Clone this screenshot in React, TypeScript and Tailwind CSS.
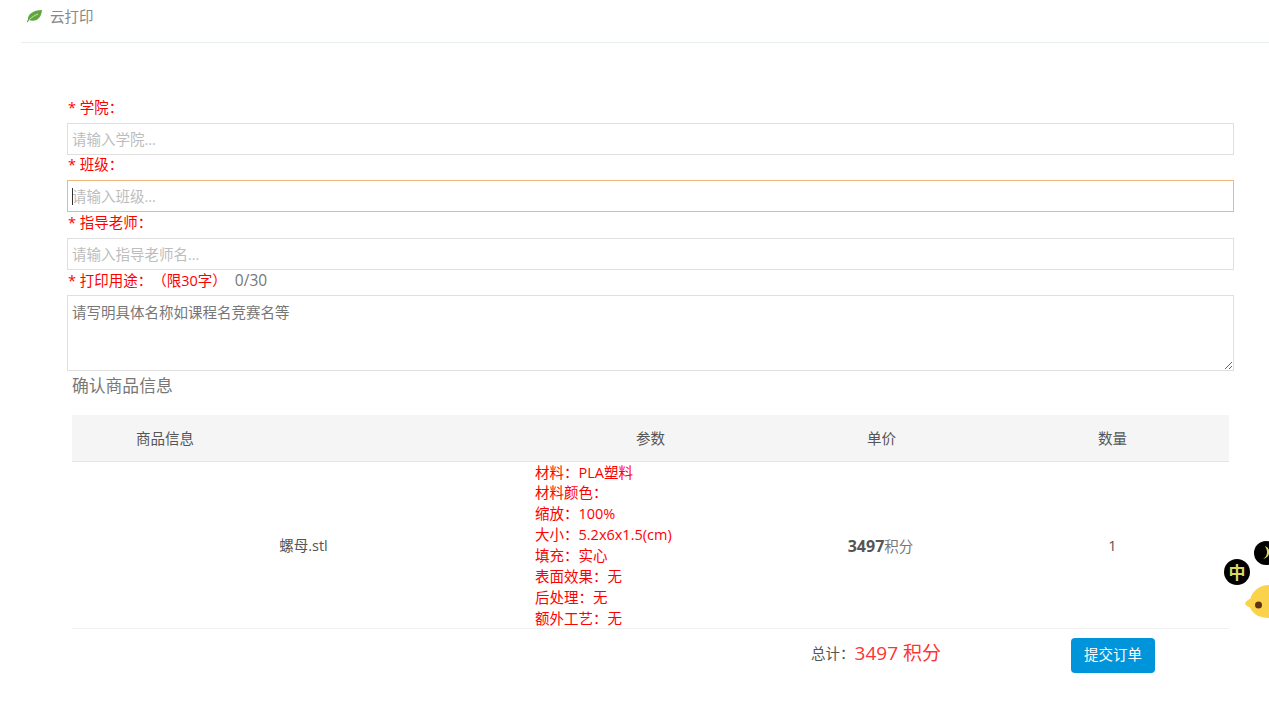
export default function App() {
  const params = ["材料：PLA塑料", "材料颜色：", "缩放：100%", "大小：5.2x6x1.5(cm)", "填充：实心", "表面效果：无", "后处理：无", "额外工艺：无"];
  const labelCls = "pl-px text-[14.5px] text-[#ff0000]";
  const inputCls = "block h-8 w-full border border-[#dfdfdf] bg-white px-1 text-[14.5px] outline-none placeholder:text-[#bdbdbd]";
  return (
    <div className="relative h-[704px] w-[1269px] overflow-hidden bg-white font-['Open_Sans','Noto_Sans_CJK_SC',sans-serif] text-[14.5px] text-[#555] [text-spacing-trim:space-all]">
      <header className="ml-[21px] flex h-[43px] items-start border-b border-[#e8edf0] pl-[5px] pt-[6px]">
        <svg width="17" height="14" viewBox="0 0 17 14" className="mt-[3px]">
          <path d="M1 13c-.2-1 .5-1.800 1-2.500C1.500 5.500 7 1 16 1c-.4 6.500-4 11-9.500 10.800-1.500-.1-2.600-.5-3.400-.8L1.500 13.500z" fill="#5fa63d" />
          <path d="M3.500 10.500C6 8 8.500 6.500 12 5" stroke="#cfe4bf" strokeWidth="1" fill="none" />
        </svg>
        <span className="ml-[7px] text-[14.5px] leading-[21px] text-[#888]">云打印</span>
      </header>

      <form className="ml-[67px] mt-[53px] w-[1167px]">
        <div className={labelCls + " h-[27px] pt-[1px] leading-[21px]"}>* 学院：</div>
        <input className={inputCls} placeholder="请输入学院..." />
        <div className={labelCls + " h-[25px] leading-[20px]"}>* 班级：</div>
        <div className="relative">
          <input className={inputCls + " border-[#f2b77c]"} placeholder="请输入班级..." />
          <span className="absolute left-[5px] top-[8px] h-[17px] w-px bg-[#333]" />
        </div>
        <div className={labelCls + " h-[26px] leading-[22px]"}>* 指导老师：</div>
        <input className={inputCls} placeholder="请输入指导老师名..." />
        <div className={labelCls + " h-[25px] leading-[20px]"}>
          * 打印用途：（限30字）<span className="ml-2 text-[15.500px] text-[#777]">0/30</span>
        </div>
        <textarea className="block h-[76px] w-full border border-[#dfdfdf] px-1 py-[6px] text-[14.5px] leading-[21px] outline-none placeholder:text-[#777]" placeholder="请写明具体名称如课程名竞赛名等" />
      </form>

      <section className="ml-[72px] w-[1157px]">
        <h2 className="h-[44px] pt-[3px] text-[16.8px] font-normal leading-[24px] text-[#777]">确认商品信息</h2>
        <table className="w-full table-fixed border-collapse">
          <colgroup>
            <col className="w-[463px]" />
            <col className="w-[230px]" />
            <col className="w-[231px]" />
            <col className="w-[233px]" />
          </colgroup>
          <thead>
            <tr className="h-[46px] border-b border-[#e5e5e5] bg-[#f5f5f5]">
              <th className="pl-[64px] pt-[2px] text-left font-normal">商品信息</th>
              <th className="pl-[1px] pt-[2px] text-center font-normal">参数</th>
              <th className="pl-[2px] pt-[2px] text-center font-normal">单价</th>
              <th className="pt-[2px] text-center font-normal">数量</th>
            </tr>
          </thead>
          <tbody>
            <tr className="border-b border-[#f0f0f0]">
              <td className="pt-[2px] text-center">螺母.stl</td>
              <td className="pt-[1px] text-left leading-[20.9px] text-[#ff0000]">
                <div className="-mb-[2px]">
                  {params.map((p) => (
                    <div key={p}>{p}</div>
                  ))}
                </div>
              </td>
              <td className="pt-[2px] text-center"><b className="text-[16px] font-bold">3497</b><span className="text-[#777]">积分</span></td>
              <td className="pt-[2px] text-center">1</td>
            </tr>
          </tbody>
        </table>
        <div className="mt-[9px] flex h-[35px] items-center justify-end pr-[74px]">
          <span className="-mt-[2px]">总计：</span>
          <span className="-mt-[4px] text-[19px] leading-[28px] text-[#ff3333]">3497 积分</span>
          <button type="button" className="ml-[130px] h-[35px] w-[84px] rounded-[4px] bg-[#0095db] text-white">提交订单</button>
        </div>
      </section>

      <div className="absolute left-[1224px] top-[559px] flex h-[26px] w-[26px] items-center justify-center rounded-full bg-black text-[17px] font-bold leading-none text-[#d8d860]">中</div>
      <div className="absolute left-[1254px] top-[541px] h-[24px] w-[24px] rounded-full bg-black">
        <svg width="24" height="24" viewBox="0 0 24 24">
          <path d="M11 5c3 1 5 4 4 8-1 3-3 4-6 5 3-2 4-4 4-7 0-2-1-4-2-6z" fill="#d8d860" />
        </svg>
      </div>
      <svg className="absolute left-[1244px] top-[584px]" width="25" height="35" viewBox="0 0 25 35">
        <path d="M25 1C16 1 8 7 6.500 14.500 4 15.500 1.500 17.500 1 19.500 1.500 21.500 4 22.500 6 23.500 9 30.500 16 34 25 34z" fill="#fbd24c" />
        <circle cx="14.500" cy="21" r="3.500" fill="#5c3317" />
      </svg>
    </div>
  );
}
